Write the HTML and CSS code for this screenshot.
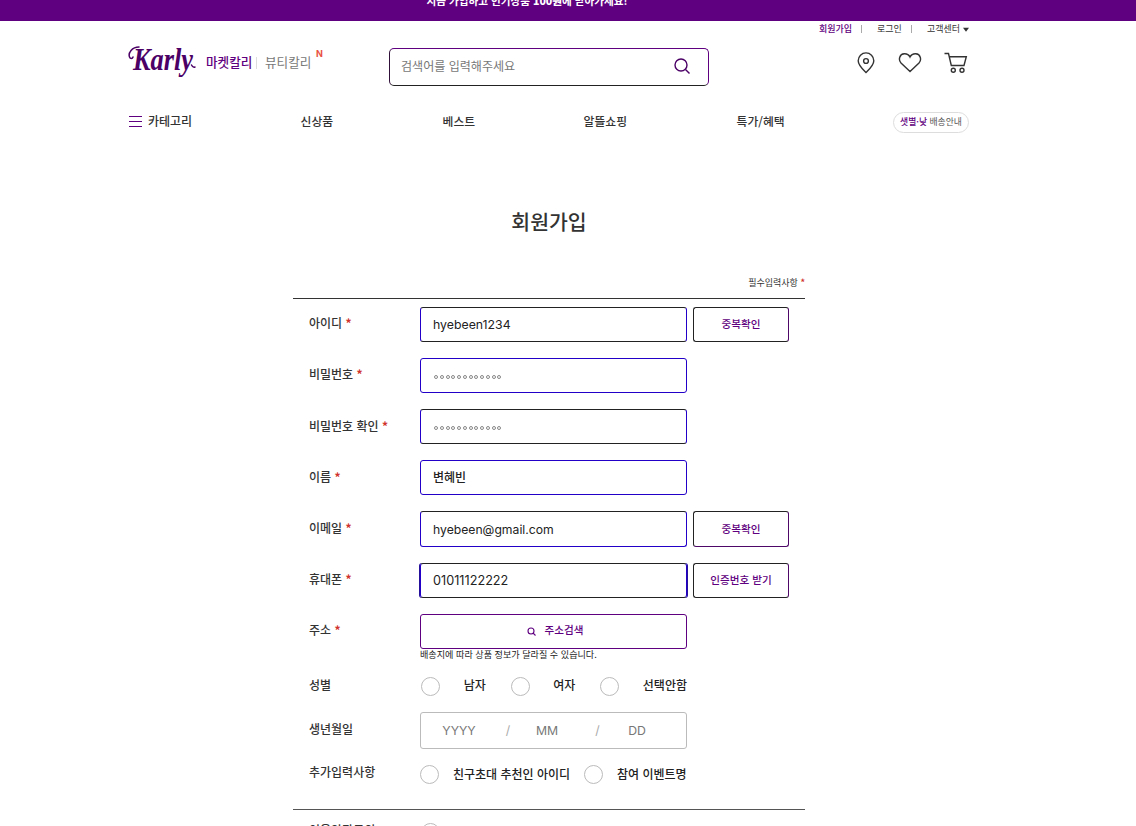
FILE: index.html
```html
<!DOCTYPE html>
<html lang="ko">
<head>
<meta charset="utf-8">
<title>회원가입</title>
<link rel="stylesheet" href="styles.css">
</head>
<body>
<div class="banner"><p>지금 가입하고 인기상품 <b>100원</b>에 받아가세요!</p></div>
<header class="header">
  <div class="user-menu"><a class="join">회원가입</a><i></i><a class="login">로그인</a><i></i><a class="help">고객센터</a><svg width="6" height="5" viewBox="0 0 7 5"><path d="M0 .5h7L3.5 5z" fill="#333"/></svg></div>
  <div class="main-bar">
    <div class="brand">
      <svg class="logo" width="72" height="42" viewBox="0 0 72 42"><text x="5" y="30" textLength="60" lengthAdjust="spacingAndGlyphs">Karly</text><path class="swash" d="M11 7C4 7 0 13 1.500 17c.7 2 3 2 3.500 0"/><path class="swash" d="M63.500 25c1 2 2.500 2.500 3.500 2"/></svg>
      <a class="market">마켓칼리</a><i></i><a class="beauty">뷰티칼리</a><sup>N</sup>
    </div>
    <div class="search"><span>검색어를 입력해주세요</span><svg width="18" height="18" viewBox="0 0 18 18" fill="none" stroke="#4b0066" stroke-width="1.4"><circle cx="8" cy="8" r="6"/><path d="M12.5 12.5l4 4"/></svg></div>
    <div class="actions">
      <svg width="18" height="22" viewBox="0 0 18 22" fill="none" stroke="#333" stroke-width="1.4"><path d="M9 20.500C6.500 18 1.200 13.300 1.200 8.700a7.800 7.800 0 0 1 15.600 0C16.800 13.300 11.500 18 9 20.500z"/><circle cx="9" cy="9" r="2.400"/></svg>
      <svg width="24" height="22" viewBox="0 0 24 22" fill="none" stroke="#333" stroke-width="1.4"><path d="M12 19.500 3 11C0 7.600 1.600 2 6.300 1.700 9 1.600 11 2.900 12 5c1-2.100 3-3.400 5.700-3.300C22.400 2 24 7.600 21 11z"/></svg>
      <svg width="24" height="22" viewBox="0 0 24 22" fill="none" stroke="#333" stroke-width="1.400"><path d="M.5 1.500h4l2.800 12h12.700L22.300 4.800H5.300"/><circle cx="9.300" cy="18.300" r="2"/><circle cx="18" cy="18.300" r="2"/></svg>
    </div>
  </div>
  <nav class="nav">
    <div class="category"><svg width="14" height="12" viewBox="0 0 14 12"><path d="M1 1.500h13M1 6.500h13M1 11.500h13" stroke="#5f0080"/></svg><span>카테고리</span></div>
    <div class="links"><a>신상품</a><a>베스트</a><a>알뜰쇼핑</a><a>특가/혜택</a></div>
    <div class="delivery"><b>샛별·낮</b> 배송안내</div>
  </nav>
</header>
<main class="signup">
  <h1>회원가입</h1>
  <p class="required">필수입력사항 <em>*</em></p>
  <form class="form">
    <div class="row"><label>아이디 <em>*</em></label><div class="field flat">hyebeen1234</div><div class="btn dark-base">중복확인</div></div>
    <div class="row"><label>비밀번호 <em>*</em></label><div class="field"><span class="dots"><i></i><i></i><i></i><i></i><i></i><i></i><i></i><i></i><i></i><i></i><i></i><i></i></span></div></div>
    <div class="row lower"><label>비밀번호 확인 <em>*</em></label><div class="field flat"><span class="dots"><i></i><i></i><i></i><i></i><i></i><i></i><i></i><i></i><i></i><i></i><i></i><i></i></span></div></div>
    <div class="row lower"><label>이름 <em>*</em></label><div class="field kr">변혜빈</div></div>
    <div class="row lower"><label>이메일 <em>*</em></label><div class="field dark-top">hyebeen@gmail.com</div><div class="btn">중복확인</div></div>
    <div class="row"><label>휴대폰 <em>*</em></label><div class="field flat focused">01011122222</div><div class="btn dark-base">인증번호 받기</div></div>
    <div class="row address"><label>주소 <em>*</em></label><div><div class="btn wide"><svg width="9" height="9" viewBox="0 0 9 9" fill="none" stroke="#5f0080" stroke-width="1.100"><circle cx="4" cy="4" r="3"/><path d="M6 6l2.500 2.500"/></svg>주소검색</div><p class="note">배송지에 따라 상품 정보가 달라질 수 있습니다.</p></div></div>
    <div class="row gender"><label>성별</label><div class="choices"><i class="radio"></i><span>남자</span><i class="radio"></i><span>여자</span><i class="radio"></i><span>선택안함</span></div></div>
    <div class="row birth"><label>생년월일</label><div class="date"><span>YYYY</span><b>/</b><span>MM</span><b>/</b><span>DD</span></div></div>
    <div class="row extra"><label>추가입력사항</label><div class="choices"><i class="radio"></i><span class="friend">친구초대 추천인 아이디</span><i class="radio"></i><span>참여 이벤트명</span></div></div>
    <div class="row terms"><label>이용약관동의</label><i class="radio"></i></div>
  </form>
</main>
</body>
</html>
```
FILE: styles.css
```css
* { box-sizing: border-box; }
html, body { height: 826px; overflow: hidden; }
body { margin: 0; background: #fff; color: #333; font: 500 12px/18px "Noto Sans CJK KR", sans-serif; }
p, h1 { margin: 0; }
em { color: #d0342c; font-style: normal; font-weight: 700; }
svg { display: block; flex: none; }

.banner { height: 21px; background: #5f0080; overflow: hidden; color: #fff; text-align: center; }
.banner p { margin: -8px 82px 0 0; font-size: 10.600px; font-weight: 700; line-height: 18px; }

.header { width: 842px; height: 119px; margin-left: 128px; }
.user-menu { display: flex; align-items: center; height: 15px; padding-left: 691px; font-size: 9px; font-weight: 400; line-height: 15px; white-space: nowrap; }
.user-menu .join { width: 42px; color: #5f0080; font-weight: 500; }
.user-menu .login { width: 34px; }
.user-menu .help { width: 36px; }
.user-menu i { width: 1px; height: 8px; background: #aaa; margin-right: 15px; }
.user-menu svg { margin: 2px 0 0; }

.main-bar { display: flex; height: 62px; padding-top: 4px; }
.brand { display: flex; width: 261px; }
.logo text { font: italic 700 32px "Liberation Serif", serif; fill: #4b0066; }
.logo .swash { fill: none; stroke: #4b0066; stroke-width: 1.500; stroke-linecap: round; }
.brand a { height: 18px; margin-top: 13px; font-size: 12.600px; white-space: nowrap; }
.brand .market { width: 50px; margin-left: 6px; color: #5f0080; }
.brand i { width: 1px; height: 12px; margin-top: 17px; background: #ddd; }
.brand .beauty { width: 51px; margin-left: 8px; color: #777; font-weight: 400; }
.brand sup { margin-top: 5px; font: 700 9px/18px Inter, sans-serif; color: #e8503f; }
.search { display: flex; align-items: center; justify-content: space-between; width: 320px; height: 38px; margin-top: 8px; padding: 0 17px 2px 11px; border: 1px solid #5f0080; border-bottom-color: #222; border-left-color: #301038; border-radius: 5px; color: #777; font-weight: 400; font-size: 12.050px; }
.actions { display: flex; align-items: center; gap: 22.500px; height: 24px; margin: 11px 0 0 148px; }

.nav { display: flex; align-items: center; height: 42px; padding-top: 6px; }
.category { display: flex; align-items: center; gap: 6px; width: 172.600px; padding-bottom: 3px; }
.links { display: flex; padding-bottom: 3px; width: 592.400px; white-space: nowrap; }
.links a { font-size: 11.800px; }
.links a:nth-child(1) { width: 142px; }
.links a:nth-child(2) { width: 141px; }
.links a:nth-child(3) { width: 153px; }
.delivery { width: 76px; height: 21px; flex: none; border: 1px solid #ddd; border-radius: 11px; font-size: 8.800px; font-weight: 400; line-height: 17px; text-align: center; color: #555; white-space: nowrap; }
.delivery b { font-weight: 500; color: #5f0080; }

.signup { width: 512px; margin-left: 293px; }
h1 { height: 133px; padding-top: 66px; font-size: 20.500px; line-height: 30px; font-weight: 500; text-align: center; }
.required { height: 25px; padding-top: 1px; font-size: 9px; font-weight: 400; line-height: 18px; text-align: right; }
.form { height: 528px; padding: 8.05px 16px 0; border-top: 1px solid #333; overflow: hidden; }
.row { display: flex; height: 51.1px; }
.row label { flex: none; width: 111px; padding-top: 7px; white-space: nowrap; }
.row.lower label { padding-top: 8px; }
.field { width: 267px; height: 35.125px; padding: 0 12px; border: 1px solid #2200c8; border-radius: 3px; font: 400 12.300px/34px Inter, sans-serif; color: #222; }
.field.flat { border-top-color: #222; border-bottom-color: #222; }
.field.dark-top { padding-top: 1px; border-top-color: #222; font-size: 12.200px; }
.field.kr { font: 500 12px/32px "Noto Sans CJK KR", sans-serif; }
.field.focused { font-size: 12.700px; box-shadow: -1px 0 #24109a, 1px 0 #24109a; }
.dots { display: flex; gap: 1.750px; padding: 16px 0 0 1px; }
.dots i { width: 4px; height: 4px; border: 1px solid #888; border-radius: 50%; }
.btn { width: 96px; height: 35.125px; margin-left: 6px; border: 1px solid #4e0868; border-top-color: #222; border-left-color: #222; border-radius: 3px; font-size: 10.600px; line-height: 31px; text-align: center; color: #5f0080; }
.lower .btn { line-height: 33px; }
.btn.dark-base { border-bottom-color: #222; }
.btn.wide { display: flex; align-items: center; justify-content: center; gap: 9px; width: 267px; margin: 0; padding: 0 0 3px 3px; border-color: #5f0080; }
.btn.wide svg { margin-top: 3px; }
.note { margin-top: -1px; font-size: 9.100px; font-weight: 400; line-height: 12px; white-space: nowrap; color: #222; }
.address { height: 62.300px; }
.gender { height: 36px; }
.gender label { padding-top: 0; }
.choices { display: flex; align-items: center; width: 267px; height: 21px; white-space: nowrap; color: #222; }
.choices span { margin-top: -2px; }
.radio { flex: none; width: 19px; height: 19px; border: 1px solid #bbb; border-radius: 50%; }
.gender .choices { justify-content: space-between; padding-left: 1px; }
.gender .choices span:nth-child(2), .gender .choices span:nth-child(4) { width: 23px; }
.birth { height: 53px; }
.birth label { padding-top: 8px; }
.date { display: grid; grid-template-columns: 76px 22px 56px 45px 34px; align-items: center; width: 267px; height: 37px; padding-top: 1px; border: 1px solid #bbb; border-radius: 3px; font: 400 12.300px/18px Inter, sans-serif; color: #777; text-align: center; }
.date b { font-weight: 400; color: #aaa; }
.extra { height: 44px; }
.extra label { padding-top: 0; margin-top: -2px; }
.extra .choices { height: 20px; }
.extra .friend { margin-left: 14px; width: 131px; }
.extra .choices span:last-child { margin-left: 14px; }
.terms { margin: 0 -16px; padding: 11px 16px 0; border-top: 1px solid #555; }
.terms label { padding-top: 0; }
.terms .radio { margin: 2px 0 0 1px; }
```
